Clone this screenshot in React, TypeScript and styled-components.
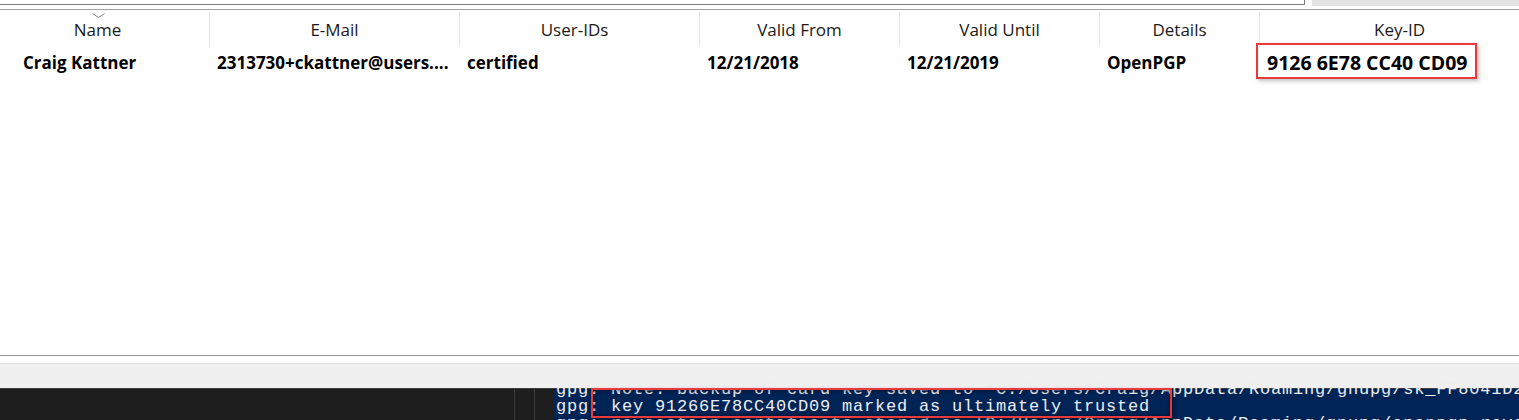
import React from "react";
import styled, { createGlobalStyle } from "styled-components";

const GlobalStyle = createGlobalStyle`
  html, body {
    margin: 0;
    padding: 0;
    background: #fff;
    overflow: hidden;
  }
  * {
    box-sizing: border-box;
  }
`;

const COLUMNS = "210px 250px 240px 200px 200px 160px 280px";

const Page = styled.div`
  display: flex;
  flex-direction: column;
  width: 1519px;
  height: 420px;
  overflow: hidden;
  font-family: "Open Sans", "Noto Sans", sans-serif;
`;

const TopStrip = styled.div`
  display: flex;
  flex: 0 0 10px;
  gap: 7px;
  border-bottom: 1px solid #a0a0a0;
  background: #fff;
`;

const SearchBox = styled.div`
  flex: 0 0 1305px;
  height: 5px;
  background: #fff;
  border-right: 1px solid #7a7a7a;
  border-bottom: 1px solid #7a7a7a;
`;

const SideButton = styled.div`
  flex: 1;
  height: 6px;
  background: #e3e3e3;
`;

const Table = styled.div`
  flex: 0 0 346px;
  overflow: hidden;
  border-bottom: 1px solid #999;
`;

const HeaderRow = styled.div`
  display: grid;
  grid-template-columns: ${COLUMNS};
  height: 37px;
`;

const HeaderCell = styled.div<{ $shift?: number }>`
  position: relative;
  display: flex;
  align-items: center;
  justify-content: center;
  margin-top: 2px;
  padding-right: ${(p) => p.$shift ?? 0}px;
  border-right: 1px solid #e5e5e5;
  font-size: 17px;
  color: #1a1a1a;
  white-space: nowrap;
`;

const SortArrow = styled.svg`
  position: absolute;
  top: 1px;
  left: 92px;
`;

const DataRow = styled.div`
  display: grid;
  grid-template-columns: ${COLUMNS};
  height: 30px;
`;

const DataCell = styled.div<{ $indent?: number }>`
  position: relative;
  display: flex;
  align-items: center;
  padding-left: ${(p) => p.$indent ?? 7}px;
  font-size: 17px;
  font-weight: 700;
  color: #000;
  white-space: nowrap;
  overflow: visible;
`;

const KeyText = styled.span`
  font-size: 19.5px;
`;

const Highlight = styled.div`
  position: absolute;
  left: -4px;
  top: -4px;
  width: 221px;
  height: 36px;
  border: 2px solid #e8393c;
  box-shadow: 2px 2px 4px rgba(0, 0, 0, 0.25);
  pointer-events: none;
`;

const Spacer = styled.div`
  flex: 0 0 7px;
  background: #fff;
`;

const StatusBar = styled.div`
  flex: 0 0 26px;
  background: #f0f0f0;
  border-top: 1px solid #dcdcdc;
  border-bottom: 1px solid #3a3a3a;
`;

const Terminal = styled.div`
  flex: 1;
  display: flex;
  background: #1e1e1e;
  min-height: 0;
`;

const TermPane = styled.div<{ $width: number; $line?: boolean }>`
  flex: 0 0 ${(p) => p.$width}px;
  border-right: ${(p) => (p.$line ? "1px solid #3c3c3c" : "none")};
`;

const Console = styled.div`
  position: relative;
  flex: 1;
  background: #012456;
  padding-left: 2px;
  overflow: visible;
`;

const Lines = styled.div`
  margin-top: -8px;
  height: 39px;
  overflow: hidden;
`;

const Line = styled.div`
  font-family: "Liberation Mono", "DejaVu Sans Mono", monospace;
  font-size: 17px;
  letter-spacing: 0.8px;
  line-height: 17px;
  height: 17px;
  color: #eeedf0;
  white-space: pre;
`;

const ConsoleMark = styled.div`
  position: absolute;
  left: 37px;
  top: -1px;
  width: 581px;
  height: 30px;
  border: 2px solid #e8393c;
  box-shadow: inset 0 0 5px rgba(0, 0, 0, 0.55), 2px 2px 4px rgba(0, 0, 0, 0.4);
  pointer-events: none;
`;

const headers = [
  { label: "Name", shift: 14 },
  { label: "E-Mail" },
  { label: "User-IDs", shift: 10 },
  { label: "Valid From" },
  { label: "Valid Until" },
  { label: "Details" },
  { label: "Key-ID", shift: 0 },
];

const App = () => {
  return (
    <>
      <GlobalStyle />
      <Page>
        <TopStrip>
          <SearchBox />
          <SideButton />
        </TopStrip>
        <Table>
          <HeaderRow>
            {headers.map((h, i) => (
              <HeaderCell key={h.label} $shift={h.shift}>
                {i === 0 && (
                  <SortArrow width="13" height="5" viewBox="0 0 13 5">
                    <path d="M0.5 0.5 L6.5 4.5 L12.5 0.5" fill="none" stroke="#8a8a8a" strokeWidth="1" />
                  </SortArrow>
                )}
                {h.label}
              </HeaderCell>
            ))}
          </HeaderRow>
          <DataRow>
            <DataCell $indent={23}>Craig Kattner</DataCell>
            <DataCell title="2313730+ckattner@users.noreply.github.com">2313730+ckattner@users....</DataCell>
            <DataCell>certified</DataCell>
            <DataCell>12/21/2018</DataCell>
            <DataCell>12/21/2019</DataCell>
            <DataCell>OpenPGP</DataCell>
            <DataCell>
              <KeyText>9126 6E78 CC40 CD09</KeyText>
              <Highlight />
            </DataCell>
          </DataRow>
        </Table>
        <Spacer />
        <StatusBar />
        <Terminal>
          <TermPane $width={515} $line />
          <TermPane $width={20} $line />
          <TermPane $width={19} />
          <Console>
            <Lines>
              <Line>gpg: Note: backup of card key saved to 'C:/Users/Craig/AppData/Roaming/gnupg/sk_FF8041D2E0C0.gpg'</Line>
              <Line>gpg: key 91266E78CC40CD09 marked as ultimately trusted</Line>
              <Line>gpg: revocation certificate stored as 'C:/Users/Craig/AppData/Roaming/gnupg/openpgp-revocs.d/'</Line>
            </Lines>
            <ConsoleMark />
          </Console>
        </Terminal>
      </Page>
    </>
  );
};

export default App;
